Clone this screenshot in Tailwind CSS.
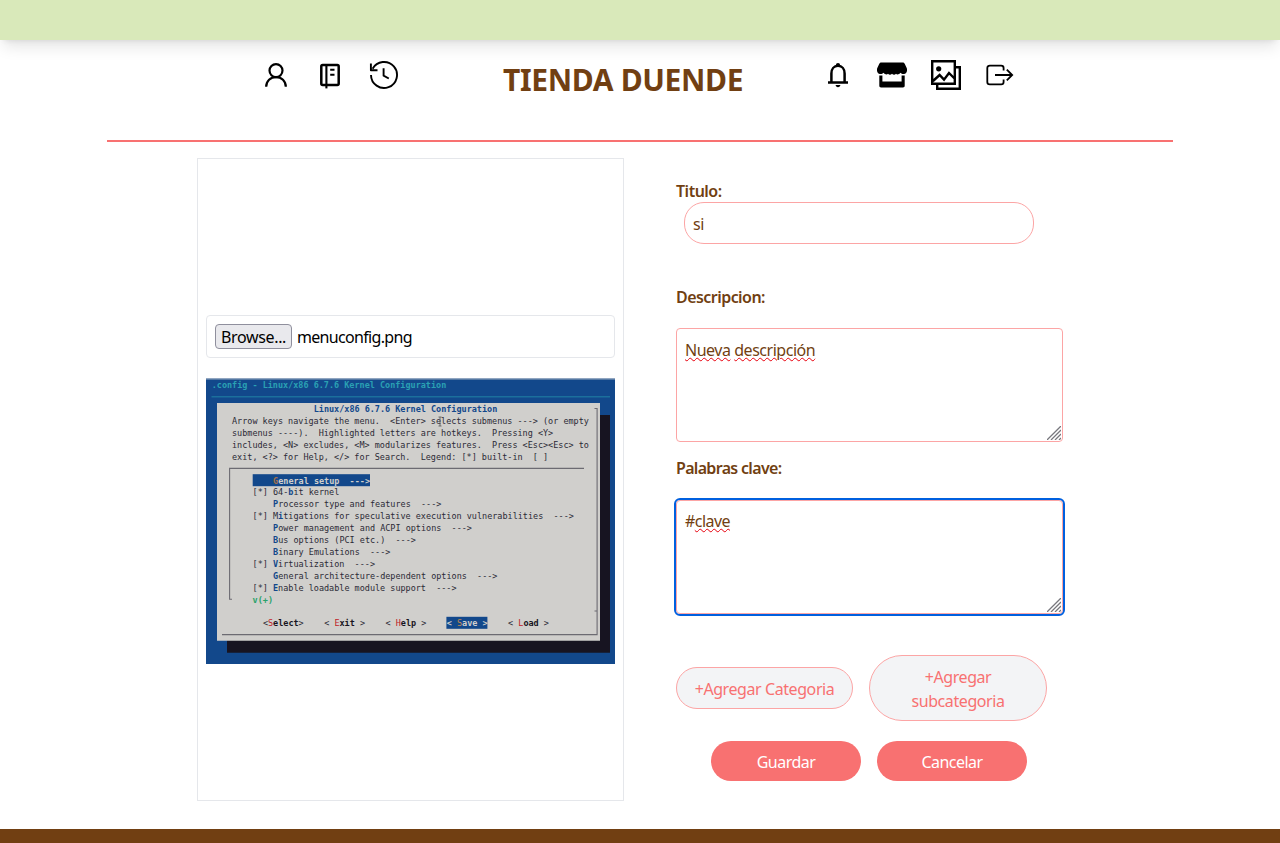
<!DOCTYPE html>
<html lang="es">
<head>
<meta charset="utf-8">
<title>Tienda Duende</title>
<script src="https://cdn.jsdelivr.net/npm/@tailwindcss/browser@4"></script>
</head>
<body class="bg-white font-['Noto_Sans','Open_Sans',sans-serif] text-base text-[#713f12] h-[843px] overflow-hidden flex flex-col">
<div class="h-10 shrink-0 bg-[#d9e9ba] shadow-[0_10px_15px_-3px_rgba(0,0,0,0.1),0_4px_6px_-4px_rgba(0,0,0,0.1)]"></div>
<header class="mx-auto w-[1066px] h-[102px] shrink-0 border-b-2 border-[#f87171] pt-5 pl-[154px] pr-[158px] flex items-start text-black">
  <nav class="flex gap-6">
    <svg class="size-[30px]" viewBox="0 0 30 30" fill="none" stroke="currentColor" stroke-width="2.2"><circle cx="15" cy="10.6" r="6.5"/><path d="M5.2 26.8C5.2 21 9.5 17.1 15 17.1s9.800 3.900 9.800 9.700"/></svg>
    <svg class="size-[30px]" viewBox="0 0 30 30" fill="none" stroke="currentColor" stroke-width="2.500"><rect x="6.300" y="5" width="17.400" height="20" rx="1.400"/><path d="M11.400 5v23.400" stroke-width="2.100"/><path d="M15.200 9.700h4.300M15.200 14.800h4.300" stroke-width="2.100"/></svg>
    <svg class="size-[30px]" viewBox="0 0 30 30" fill="none" stroke="currentColor" stroke-width="1.900" stroke-linejoin="round"><path d="M2 15A13 13 0 1 0 3.600 8.700M1.900 3.600v6.600h6.600M14.600 8.200v7.500l5.200 2.800"/></svg>
  </nav>
  <h1 class="ml-[104px] w-[324px] text-[30px] leading-[39px] font-bold tracking-[-0.35px] text-[#713f12] whitespace-nowrap">TIENDA DUENDE</h1>
  <nav class="flex gap-6">
    <svg class="size-[30px]" viewBox="0 0 30 30" fill="none" stroke="currentColor" stroke-width="2.500"><path d="M8.400 22V13.500c0-4.400 2.600-7.700 6.600-7.700s6.600 3.300 6.600 7.700V22M5 22.400h20"/><path d="M12.900 5.700v-.6a2.100 2.100 0 1 1 4.200 0v.6zM12.600 25h4.800c0 1.200-1.100 2.200-2.400 2.200s-2.400-1-2.400-2.200z" fill="currentColor" stroke="none"/></svg>
    <svg class="size-[30px]" viewBox="0 0 30 30" fill="currentColor"><path d="M4.400 2.500h21.200c1 0 1.600.5 2.100 1.300l2 4.200c1 2.700-.2 5.600-2.700 6-1.500.2-2.600-.4-3.500-1.300-1.300 1.700-3.500 2.400-4.500 1-1.100 1.500-2.800 1.500-4 0-1.200 1.500-2.900 1.500-4 0-1 1.400-3.200.7-4.500-1-.9.9-2 1.500-3.500 1.300-2.500-.4-3.700-3.300-2.700-6l2-4.200c.5-.8 1.100-1.300 2.100-1.300z"/><path d="M2.300 15.600h3.100v6h19.200v-6h3.100v10.200c0 1-.7 1.700-1.700 1.700H4c-1 0-1.700-.7-1.700-1.700z"/></svg>
    <svg class="size-[30px]" viewBox="0 0 30 30" fill="none" stroke="currentColor" stroke-width="2.400"><path d="M1.200 1.200h22.600v22.600H1.200zM25 7.200h3.800v21.600H6.200V24.500M2 21l6.600-6 4.400 4.600 5-6.600 6 6"/><circle cx="7.700" cy="8.800" r="2.600" fill="currentColor" stroke="none"/></svg>
    <svg class="size-[30px]" viewBox="0 0 30 30" fill="none" stroke="currentColor" stroke-width="1.800"><path d="M18.600 10.400V8c0-1.500-1-2.400-2.400-2.400H4.800C3.400 5.600 2.300 6.500 2.300 8v13.900c0 1.500 1.100 2.400 2.500 2.400h11.400c1.400 0 2.400-.9 2.400-2.400v-2.400M10 15h17.400M21.800 9.600l5.400 5.400-5.400 5.400"/></svg>
  </nav>
</header>
<main class="mx-auto w-[886px] mt-4 h-[643px] shrink-0 flex">
  <section class="w-[427px] h-[643px] border border-[#e5e7eb] px-2 pt-[156px]">
    <div class="h-[43px] border border-[#e5e7eb] rounded flex items-center pl-2 text-black">
      <button class="h-[25px] w-[77px] -mt-px border border-[#8f8f9d] rounded bg-[#e9e9ed] pt-px leading-[23px] tracking-[-0.35px] whitespace-nowrap text-center">Browse...</button>
      <span class="ml-[5px] tracking-[-0.68px]">menuconfig.png</span>
    </div>
    <svg class="block mt-5 w-[409px] h-[286px] font-['DejaVu_Sans_Mono',monospace] text-[8.480px] [&_text]:whitespace-pre" viewBox="206 378 409 286" fill="#2b2a36">
      <rect x="206" y="378.500" width="409" height="286" fill="#12488b"/>
      <path d="M206 379h409" stroke="#9aa9bd" stroke-width="1"/>
      <path d="M211.500 396.800H610" stroke="#1b6f9c" stroke-width="1.400"/>
      <path d="M227 415H610v237.700H227z" fill="#171421"/>
      <path d="M217 403h383v237.700H217z" fill="#d0cfcc"/>
      <g fill="none" stroke="#6c6b72" stroke-width="1.100"><path d="M232 599.300h-2.400V468.400H584M594.500 408.500h2.600v126M597.100 534v100.600H222M594.500 611h2.600"/></g>
      <rect x="252.700" y="474.200" width="117.300" height="12" fill="#12488b"/>
      <rect x="446.400" y="616.800" width="41" height="12" fill="#12488b"/>
      <text x="211.700" y="388.200" font-weight="bold" fill="#2aa1b3">.config - Linux/x86 6.7.6 Kernel Configuration</text>
      <text x="313.700" y="412" font-weight="bold" fill="#12488b">Linux/x86 6.7.6 Kernel Configuration</text>
      <text x="232" y="424">Arrow keys navigate the menu.  &lt;Enter&gt; selects submenus ---&gt; (or empty</text>
      <text x="232" y="435.900">submenus ----).  Highlighted letters are hotkeys.  Pressing &lt;Y&gt;</text>
      <text x="232" y="447.800">includes, &lt;N&gt; excludes, &lt;M&gt; modularizes features.  Press &lt;Esc&gt;&lt;Esc&gt; to</text>
      <text x="232" y="459.700">exit, &lt;?&gt; for Help, &lt;/&gt; for Search.  Legend: [*] built-in  [ ]</text>
      <path d="M438.500 417h3M440 417v9M438.500 426h3" fill="none" stroke="#555" stroke-width=".8"/>
      <text x="273.100" y="483.500" font-weight="bold" fill="#d0cfcc"><tspan fill="#a2734c">G</tspan>eneral setup  ---&gt;</text>
      <text x="252.600" y="495.400">[*] 64-<tspan font-weight="bold" fill="#12488b">b</tspan>it kernel</text>
      <text x="273.100" y="507.300"><tspan font-weight="bold" fill="#12488b">P</tspan>rocessor type and features  ---&gt;</text>
      <text x="252.600" y="519.200">[*] M<tspan font-weight="bold" fill="#12488b">i</tspan>tigations for speculative execution vulnerabilities  ---&gt;</text>
      <text x="273.100" y="531.100"><tspan font-weight="bold" fill="#12488b">P</tspan>ower management and ACPI options  ---&gt;</text>
      <text x="273.100" y="543"><tspan font-weight="bold" fill="#12488b">B</tspan>us options (PCI etc.)  ---&gt;</text>
      <text x="273.100" y="555"><tspan font-weight="bold" fill="#12488b">B</tspan>inary Emulations  ---&gt;</text>
      <text x="252.600" y="566.900">[*] <tspan font-weight="bold" fill="#12488b">V</tspan>irtualization  ---&gt;</text>
      <text x="273.100" y="578.800"><tspan font-weight="bold" fill="#12488b">G</tspan>eneral architecture-dependent options  ---&gt;</text>
      <text x="252.600" y="590.700">[*] <tspan font-weight="bold" fill="#12488b">E</tspan>nable loadable module support  ---&gt;</text>
      <text x="252.600" y="602.600" font-weight="bold" fill="#26a269">v(+)</text>
      <text x="262.900" y="626.300">&lt;<tspan fill="#c01c28">S</tspan><tspan font-weight="bold" fill="#171421">elect</tspan>&gt;</text>
      <text x="324.200" y="626.300">&lt; <tspan fill="#c01c28">E</tspan><tspan font-weight="bold" fill="#171421">xit</tspan> &gt;</text>
      <text x="385.500" y="626.300">&lt; <tspan fill="#c01c28">H</tspan><tspan font-weight="bold" fill="#171421">elp</tspan> &gt;</text>
      <text x="446.800" y="626.300" font-weight="bold" fill="#d0cfcc">&lt; <tspan font-weight="normal" fill="#c08a50">S</tspan>ave &gt;</text>
      <text x="508.100" y="626.300">&lt; <tspan fill="#c01c28">L</tspan><tspan font-weight="bold" fill="#171421">oad</tspan> &gt;</text>
    </svg>
  </section>
  <section class="ml-[52px] w-[387px] pt-5 flex flex-col">
    <label class="h-6 leading-6 pt-px font-semibold tracking-[-0.5px]">Titulo:</label>
    <div class="ml-2 w-[350px] h-[42px] border border-[#fca5a5] rounded-[20px] px-2 pt-[9px] leading-6 tracking-[-0.45px]">si</div>
    <label class="mt-10 h-[25px] leading-6 pt-px font-semibold tracking-[-0.55px]">Descripcion:</label>
    <div class="relative mt-[19px] h-[114px] border border-[#fca5a5] rounded px-2 pt-[9px] leading-6 tracking-[-0.47px]">
      <span class="underline decoration-wavy decoration-red-600 decoration-1 underline-offset-1">Nueva</span> <span class="underline decoration-wavy decoration-red-600 decoration-1 underline-offset-1">descripción</span>
      <svg class="absolute right-px bottom-px size-[14px]" viewBox="0 0 14 14" stroke="#77777d" stroke-width="1.300"><path d="M0 14L14 0M4 14L14 4M8 14l6-6M12 14l2-2"/></svg>
    </div>
    <label class="mt-[13px] h-[25px] leading-6 pt-px font-semibold tracking-[-0.68px]">Palabras clave:</label>
    <div class="relative mt-5 h-[114px] border border-[#fca5a5] rounded outline-2 outline-[#0060df] px-2 pt-2 leading-6 tracking-[-0.55px]">
      <span>#</span><span class="underline decoration-wavy decoration-red-600 decoration-1 underline-offset-1">clave</span>
      <svg class="absolute right-px bottom-px size-[14px]" viewBox="0 0 14 14" stroke="#77777d" stroke-width="1.300"><path d="M0 14L14 0M4 14L14 4M8 14l6-6M12 14l2-2"/></svg>
    </div>
    <div class="mt-[41px] flex items-center gap-4 text-[#f87171] text-center leading-6 tracking-[-0.42px]">
      <button class="w-[177px] h-[42px] rounded-[21px] border border-[#fca5a5] bg-[#f3f4f6] pt-[2px]">+Agregar Categoria</button>
      <button class="w-[178px] h-[66px] rounded-[33px] border border-[#fca5a5] bg-[#f3f4f6] pt-[2px]">+Agregar<br>subcategoria</button>
    </div>
    <div class="mt-5 ml-[35px] flex gap-4 text-white leading-6 tracking-[-0.52px]">
      <button class="w-[150px] h-10 rounded-full bg-[#f87171] pt-[2px]">Guardar</button>
      <button class="w-[150px] h-10 rounded-full bg-[#f87171] pt-[2px]">Cancelar</button>
    </div>
  </section>
</main>
<footer class="mt-7 h-[14px] shrink-0 bg-[#713f12]"></footer>
</body>
</html>
